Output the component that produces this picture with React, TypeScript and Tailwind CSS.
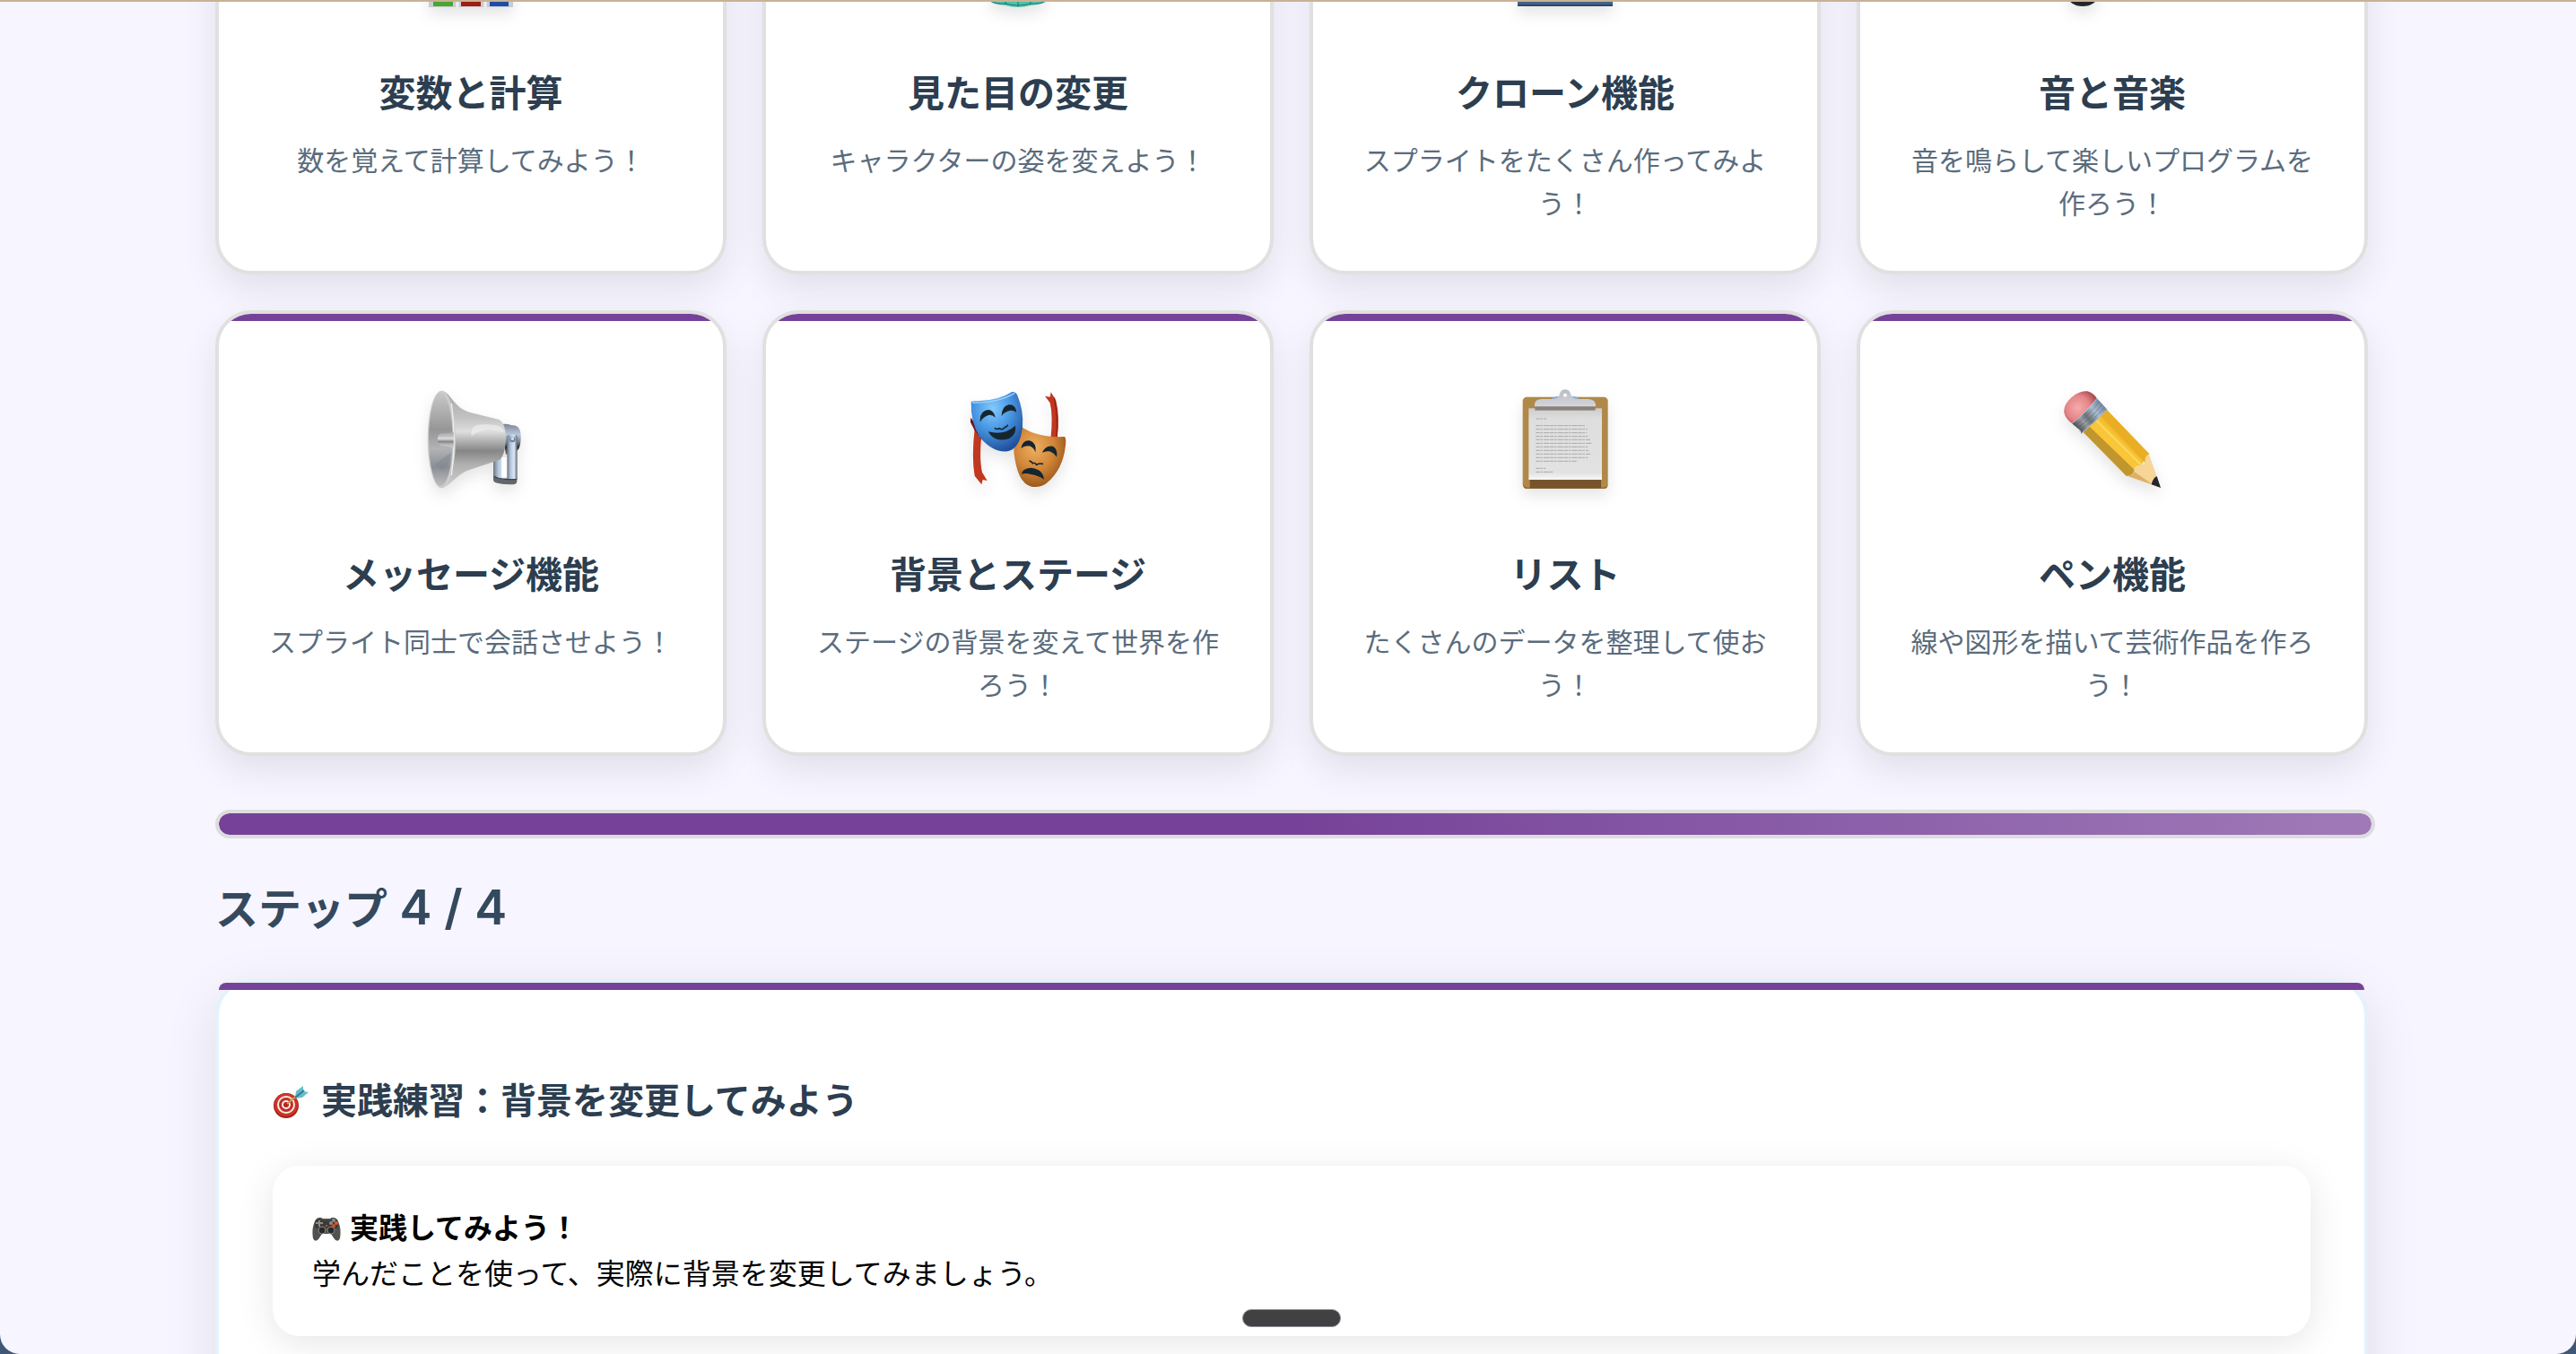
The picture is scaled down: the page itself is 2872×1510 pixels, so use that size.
import type { ReactNode } from "react";

function Svg({ box, children }: { box: string; children: ReactNode }) {
  return (
    <svg viewBox={box} aria-hidden="true" className="size-28 overflow-visible drop-shadow-[0_8px_8px_rgba(0,0,0,0.1)]">
      {children}
    </svg>
  );
}

function ChartIcon() {
  return (
    <Svg box="0 0 112 112">
      <rect x="9" y="4" width="94" height="107" fill="#c9cdd2" />
      <path d="M41 4V111M72 4V111" stroke="#eef0f2" strokeWidth="3" />
      <rect x="14" y="50" width="22" height="60" fill="#4ba531" />
      <rect x="45" y="10" width="22" height="100" fill="#9f1d14" />
      <rect x="77" y="30" width="21" height="80" fill="#1d4ea5" />
    </Svg>
  );
}

function DressIcon() {
  return (
    <Svg box="0 0 112 112">
      <path d="M36 4H76L72 50L88 104Q84 108 70 109Q56 113 42 109Q28 108 24 104L40 50Z" fill="#4fc0ae" />
      <path d="M25 104Q32 108 42 107Q56 111 70 107Q80 108 87 104M40 101L43 108M56 98V110M72 101L69 108" fill="none" stroke="#22776d" strokeWidth="1" />
    </Svg>
  );
}

function BustsIcon() {
  return (
    <Svg box="0 0 112 112">
      <circle cx="56" cy="34" r="28" fill="#4c6a90" />
      <path d="M3 110V92Q6 76 34 70H78Q106 76 109 92V110Z" fill="#44628b" />
      <path d="M3 109H109" stroke="#2d466b" strokeWidth="2" />
    </Svg>
  );
}

function NoteIcon() {
  return (
    <Svg box="0 0 112 112">
      <ellipse cx="23" cy="98" rx="17" ry="12" fill="#22262b" />
      <ellipse cx="84" cy="76" rx="17" ry="12" fill="#22262b" />
      <path d="M36 96V14L97 4V76" fill="none" stroke="#22262b" strokeWidth="6" />
    </Svg>
  );
}

function MegaphoneIcon() {
  return (
    <Svg box="87 72 336 336">
      <defs>
        <linearGradient id="horn" x1="0" y1="0" x2="0" y2="1">
          <stop offset="0" stopColor="#a8a8a8" />
          <stop offset=".28" stopColor="#c2c2c2" />
          <stop offset=".42" stopColor="#dedede" />
          <stop offset=".62" stopColor="#868686" />
          <stop offset=".76" stopColor="#b0b0b0" />
          <stop offset="1" stopColor="#d0d0d0" />
        </linearGradient>
        <linearGradient id="mouth" x1="0" y1="0" x2="0" y2="1">
          <stop offset="0" stopColor="#c8c8c8" />
          <stop offset=".4" stopColor="#969697" />
          <stop offset=".6" stopColor="#b2b3b6" />
          <stop offset=".8" stopColor="#8b8e95" />
          <stop offset="1" stopColor="#bebebf" />
        </linearGradient>
        <linearGradient id="cap" x1="0" y1="0" x2="0" y2="1">
          <stop offset="0" stopColor="#7f8893" />
          <stop offset=".35" stopColor="#b8c8dc" />
          <stop offset=".6" stopColor="#71808f" />
          <stop offset=".75" stopColor="#2f3336" />
          <stop offset="1" stopColor="#6d7276" />
        </linearGradient>
        <linearGradient id="arm" x1="0" y1="0" x2="1" y2="0">
          <stop offset="0" stopColor="#6c7682" />
          <stop offset=".35" stopColor="#b5c7de" />
          <stop offset=".7" stopColor="#dce8f6" />
          <stop offset="1" stopColor="#59636e" />
        </linearGradient>
      </defs>
      <path d="M330 300H357V370H378V388Q335 388 330 374Z" fill="url(#arm)" />
      <path d="M358 300H376V366H358Z" fill="#fff" />
      <path d="M356 190Q370 186 392 193Q423 190 422 235Q421 280 402 280L372 291Z" fill="url(#cap)" />
      <path d="M376 232Q377 224 386 224H402Q410 224 410 234V375H376Z" fill="url(#arm)" />
      <path d="M330 362Q342 372 376 374H409V382Q407 391 396 391Q340 390 331 380Z" fill="#62676d" />
      <path d="M332 364Q345 372 376 374H408" fill="none" stroke="#303437" strokeWidth="3" />
      <circle cx="394" cy="240" r="10" fill="#748398" />
      <circle cx="394" cy="237" r="6" fill="#c9dcf4" />
      <path d="M157 77C190 84 194 130 250 149L350 174Q370 185 372 232Q371 290 352 308L250 342C205 358 184 400 157 402Z" fill="url(#horn)" />
      <path d="M257 230C252 186 284 188 338 192Q360 194 366 216C330 204 280 204 257 230Z" fill="#f0f0f0" opacity=".65" />
      <ellipse cx="157" cy="240" rx="47" ry="163" fill="#cccccc" />
      <ellipse cx="154" cy="240" rx="40" ry="156" fill="url(#mouth)" />
      <path d="M190 120Q207 240 190 360" fill="none" stroke="#ededed" strokeWidth="4" />
      <path d="M135 322L188 285Q188 320 164 342Q146 344 135 322Z" fill="#80858e" opacity=".5" />
      <path d="M197 216L153 221Q143 225 144 240Q144 258 155 261L197 267Z" fill="url(#horn)" />
    </Svg>
  );
}

function MasksIcon() {
  return (
    <Svg box="57 72 336 336">
      <defs>
        <radialGradient id="blue" cx=".42" cy=".28" r=".75">
          <stop offset="0" stopColor="#84c9fb" />
          <stop offset=".45" stopColor="#4b9ae6" />
          <stop offset="1" stopColor="#1f4f9a" />
        </radialGradient>
        <radialGradient id="gold" cx=".4" cy=".35" r=".75">
          <stop offset="0" stopColor="#f0b063" />
          <stop offset=".5" stopColor="#d08537" />
          <stop offset="1" stopColor="#8a4814" />
        </radialGradient>
      </defs>
      <path d="M67 168L104 218Q94 300 105 350L122 378L107 375L103 391L80 362Q69 300 80 205L66 182Z" fill="#c2371f" />
      <path d="M67 168L104 218L102 240L80 210L66 182Z" fill="#6c1520" />
      <path d="M315 95L332 98L335 82L352 110Q366 165 356 236L335 232Q342 160 332 118Z" fill="#c2371f" />
      <path d="M346 100Q360 165 354 232" fill="none" stroke="#8f2112" strokeWidth="4" />
      <path d="M235 197Q290 235 380 231Q387 234 384 260Q376 340 320 387Q300 402 270 398Q222 388 211 280Q211 235 235 197Z" fill="url(#gold)" />
      <path d="M68 115Q72 110 90 112Q160 110 205 81Q216 79 222 90Q245 145 240 200Q232 270 190 280Q140 285 95 230Q66 180 68 115Z" fill="url(#blue)" />
      <path d="M72 117Q160 118 214 85" fill="none" stroke="#9bd2fb" strokeWidth="4" />
      <g fill="#16262e">
        <path d="M98 175Q98 145 124 141Q144 141 149 167Q136 154 121 161Q108 165 98 182Z" />
        <path d="M170 162Q170 130 194 124Q217 122 220 150Q206 139 190 146Q177 150 170 162Z" />
        <path d="M125 214Q180 228 216 194Q221 222 196 237Q146 253 125 214Z" />
        <path d="M235 270Q240 242 263 244Q287 250 284 283Q275 263 260 262Q247 260 235 270Z" />
        <path d="M306 284Q318 258 342 263Q359 272 354 299Q342 282 329 280Q318 278 306 284Z" />
        <path d="M237 356Q238 338 268 335Q309 340 312 374Q292 360 268 357Q252 352 237 356Z" />
      </g>
      <path d="M148 203Q154 208 163 203Q173 211 180 200Q188 199 190 193M264 312Q272 316 274 320Q282 316 287 325Q297 319 307 322" fill="none" stroke="#16262e" strokeWidth="5" strokeLinecap="round" />
    </Svg>
  );
}

const LETTER_LINES = [
  [194, 166], [206, 172], [218, 170], [230, 174], [241, 182], [253, 188],
  [265, 174], [277, 176], [289, 182], [301, 174], [313, 136],
];

function ClipboardIcon() {
  return (
    <Svg box="57 72 336 336">
      <defs>
        <linearGradient id="paper" x1="0" y1="0" x2="0" y2="1">
          <stop offset="0" stopColor="#cdcdcd" />
          <stop offset=".15" stopColor="#dedede" />
          <stop offset=".9" stopColor="#e2e2e2" />
          <stop offset="1" stopColor="#f8f8f8" />
        </linearGradient>
        <linearGradient id="clip" x1="0" y1="0" x2="0" y2="1">
          <stop offset="0" stopColor="#b9bdc2" />
          <stop offset="1" stopColor="#d3d7db" />
        </linearGradient>
      </defs>
      <rect x="83" y="98" width="285" height="307" rx="14" fill="#b08949" />
      <path d="M84 390Q84 405 98 405H354Q368 405 368 390Q366 400 354 401H98Q86 400 84 390Z" fill="#8d6732" />
      <rect x="107" y="370" width="238" height="33" fill="#76552d" />
      <rect x="103" y="136" width="245" height="239" fill="url(#paper)" />
      <g stroke="#a9a9a9" strokeWidth="3" strokeDasharray="13 2 8 3 19 2">
        <path d="M127 171H162" />
        {LETTER_LINES.map(([y, w]) => (
          <path key={y} d={`M127 ${y}H${127 + w}`} />
        ))}
        <path d="M127 337H160M127 349H184" />
      </g>
      <path d="M178 106Q188 94 204 96L225 88L246 96Q264 94 272 106Z" fill="#8fadd6" />
      <rect x="124" y="129" width="202" height="14" fill="#8b817b" />
      <path d="M123 130V122Q124 106 148 105H188Q204 102 206 90Q210 74 225 73Q240 74 244 90Q247 102 262 105H300Q326 106 327 124V130Z" fill="url(#clip)" />
      <circle cx="225" cy="92" r="6" fill="#fff" />
    </Svg>
  );
}

function PencilIcon() {
  return (
    <Svg box="57 72 336 336">
      <defs>
        <radialGradient id="rubber" cx=".42" cy=".5" r=".6">
          <stop offset="0" stopColor="#f5abac" />
          <stop offset=".6" stopColor="#e58587" />
          <stop offset="1" stopColor="#a84c50" />
        </radialGradient>
        <linearGradient id="metal" x1="100" y1="205" x2="195" y2="120" gradientUnits="userSpaceOnUse">
          <stop offset="0" stopColor="#3c3f42" />
          <stop offset=".3" stopColor="#999fa3" />
          <stop offset=".45" stopColor="#6d7479" />
          <stop offset=".7" stopColor="#a9bcd2" />
          <stop offset="1" stopColor="#6d819b" />
        </linearGradient>
      </defs>
      <path d="M64 150Q60 125 90 98Q118 75 142 79Q162 84 174 104L94 190Q68 172 64 150Z" fill="url(#rubber)" />
      <path d="M206 140L348 288L300 355L272 362L128 216Z" fill="#f4bd2d" />
      <path d="M128 216L148 196L300 342L290 362H272Z" fill="#c1962f" />
      <path d="M148 196L176 168L324 314L300 342Z" fill="#f8c637" />
      <path d="M184 160L206 140L348 288L334 318Z" fill="#e9ae24" />
      <path d="M172 178L320 324" stroke="#ffdf72" strokeWidth="4" />
      <path d="M348 290L387 402L275 362Q294 360 298 344Q298 327 314 327Q334 326 335 312Q334 292 348 290Z" fill="#f6d596" />
      <path d="M275 362Q294 360 298 348L362 392Z" fill="#dcb069" />
      <path d="M374 363L387 402L356 391Q360 370 374 363Z" fill="#25262c" />
      <path d="M90 187Q128 160 174 103L208 140Q170 180 122 221L118 210Z" fill="url(#metal)" />
      <path d="M98 194Q142 163 183 113M107 203Q152 172 192 122M114 212Q160 180 200 132" fill="none" stroke="#4d565e" strokeWidth="2" opacity=".6" />
      <path d="M90 187Q128 160 174 103M121 220Q170 180 207 140" fill="none" stroke="#b2c3d6" strokeWidth="3" />
    </Svg>
  );
}

function TargetIcon() {
  return (
    <svg viewBox="0 0 40 40" aria-hidden="true" className="mt-2 size-10 shrink-0">
      <ellipse cx="15" cy="24" rx="14" ry="14" fill="#a52118" />
      <circle cx="15" cy="23" r="13" fill="#cf3328" />
      <circle cx="15" cy="23" r="10" fill="#f6eeea" />
      <circle cx="15" cy="23" r="8" fill="#c62d24" />
      <circle cx="15" cy="23" r="5" fill="#f6eeea" />
      <circle cx="15" cy="23" r="3" fill="#b3261e" />
      <path d="M16 22L28 12" stroke="#c79a54" strokeWidth="2" />
      <path d="M25 16L26 8L34 2L34 8L40 9L33 15Z" fill="#67bcc9" />
      <path d="M25 15L35 7" stroke="#2f7f92" strokeWidth="2" />
    </svg>
  );
}

function GamepadIcon() {
  return (
    <svg viewBox="0 0 32 32" aria-hidden="true" className="mt-1 size-8 shrink-0">
      <path d="M4 6Q8 2 12 5H20Q24 2 28 6Q33 15 31 27Q29 32 25 28L21 22H11L7 28Q3 32 1 27Q-1 15 4 6Z" fill="#51524e" />
      <path d="M4 7Q8 4 12 7H20Q24 4 28 7Q30 12 28 16H4Q2 12 4 7Z" fill="#3b3c39" />
      <path d="M8 7V14M4 10H12" stroke="#8b8c88" strokeWidth="2" />
      <circle cx="24" cy="7" r="2" fill="#8b8c88" />
      <circle cx="27" cy="10" r="2" fill="#e7562c" />
      <circle cx="21" cy="10" r="2" fill="#8b8c88" />
      <circle cx="24" cy="13" r="2" fill="#d64f2a" />
      <circle cx="11" cy="18" r="4" fill="#282927" stroke="#85868a" />
      <circle cx="21" cy="18" r="4" fill="#282927" stroke="#85868a" />
      <circle cx="16" cy="13" r="1" fill="#e7562c" />
    </svg>
  );
}

const TOPICS = [
  { title: "変数と計算", text: "数を覚えて計算してみよう！", icon: <ChartIcon /> },
  { title: "見た目の変更", text: "キャラクターの姿を変えよう！", icon: <DressIcon /> },
  { title: "クローン機能", text: "スプライトをたくさん作ってみよう！", icon: <BustsIcon /> },
  { title: "音と音楽", text: "音を鳴らして楽しいプログラムを作ろう！", icon: <NoteIcon /> },
  { title: "メッセージ機能", text: "スプライト同士で会話させよう！", icon: <MegaphoneIcon /> },
  { title: "背景とステージ", text: "ステージの背景を変えて世界を作ろう！", icon: <MasksIcon /> },
  { title: "リスト", text: "たくさんのデータを整理して使おう！", icon: <ClipboardIcon /> },
  { title: "ペン機能", text: "線や図形を描いて芸術作品を作ろう！", icon: <PencilIcon /> },
];

function TopicCard({ title, text, icon }: { title: string; text: string; icon: ReactNode }) {
  return (
    <a
      href="#practice"
      className="relative block overflow-hidden rounded-[40px] border-4 border-[#e0e0e0] bg-white px-[50px] pt-[50px] pb-[53px] text-center shadow-[0_16px_40px_rgba(0,0,0,0.09)]"
    >
      <span className="absolute inset-x-0 top-0 h-2 bg-[#764299]" />
      <div className="mb-[27px] flex h-[180px] items-center justify-center">{icon}</div>
      <h3 className="mb-5 text-[41px] leading-[63px] font-bold text-[#2c3e50]">{title}</h3>
      <p className="text-[30px] leading-[48px] text-[#5a6c7d]">{text}</p>
    </a>
  );
}

export default function App() {
  return (
    <div className="h-screen bg-[#3f5878]">
      <div
        lang="ja"
        className="relative h-full overflow-hidden rounded-b-[22px] border-t-2 border-[#c8b294] bg-[#f7f5ff] pr-58 pl-60 font-['Noto_Sans_CJK_JP',sans-serif]"
      >
        <section className="-mt-[193px] grid grid-cols-4 gap-10">
          {TOPICS.map((topic) => (
            <TopicCard key={topic.title} {...topic} />
          ))}
        </section>

        <div
          role="progressbar"
          aria-label="ステップ"
          aria-valuemin={0}
          aria-valuemax={4}
          aria-valuenow={4}
          className="mt-[60px] -mr-2 h-8 overflow-hidden rounded-full border-4 border-[#dddddd]"
        >
          <div className="h-full w-full rounded-full bg-linear-to-r from-[#764299] from-50% to-[#a07ab8]" />
        </div>

        <h2 className="mt-[37px] mb-[43px] h-[77px] text-5xl leading-[77px] font-bold text-[#34495e]">
          ステップ<span className="font-['Inter',sans-serif] text-[54px] leading-[77px] font-semibold"> 4 / 4</span>
        </h2>

        <section
          id="practice"
          className="relative rounded-[40px] border-4 border-[#e3f2fd] bg-white px-[60px] pt-[97px] pb-[100px] shadow-[0_16px_60px_rgba(0,0,0,0.1)]"
        >
          <span className="absolute inset-x-0 top-0 h-2 rounded-t-lg bg-[#764299]" />
          <h3 className="mb-[43px] flex items-center gap-3.5 text-[40px] leading-[64px] font-bold text-[#2c3e50]">
            <TargetIcon />
            実践練習：背景を変更してみよう
          </h3>
          <div className="rounded-[30px] bg-white px-11 pt-[42px] pb-[46px] text-[32px] leading-[51px] text-black shadow-[0_8px_40px_rgba(0,0,0,0.1)]">
            <p className="flex items-center gap-2.5 font-bold">
              <GamepadIcon />
              実践してみよう！
            </p>
            <p>学んだことを使って、実際に背景を変更してみましょう。</p>
          </div>
        </section>

        <div className="absolute inset-x-0 bottom-[30px] flex justify-center pl-2">
          <span className="h-5 w-[110px] rounded-full border border-[#8a8a94] bg-[#414141]" />
        </div>
      </div>
    </div>
  );
}
